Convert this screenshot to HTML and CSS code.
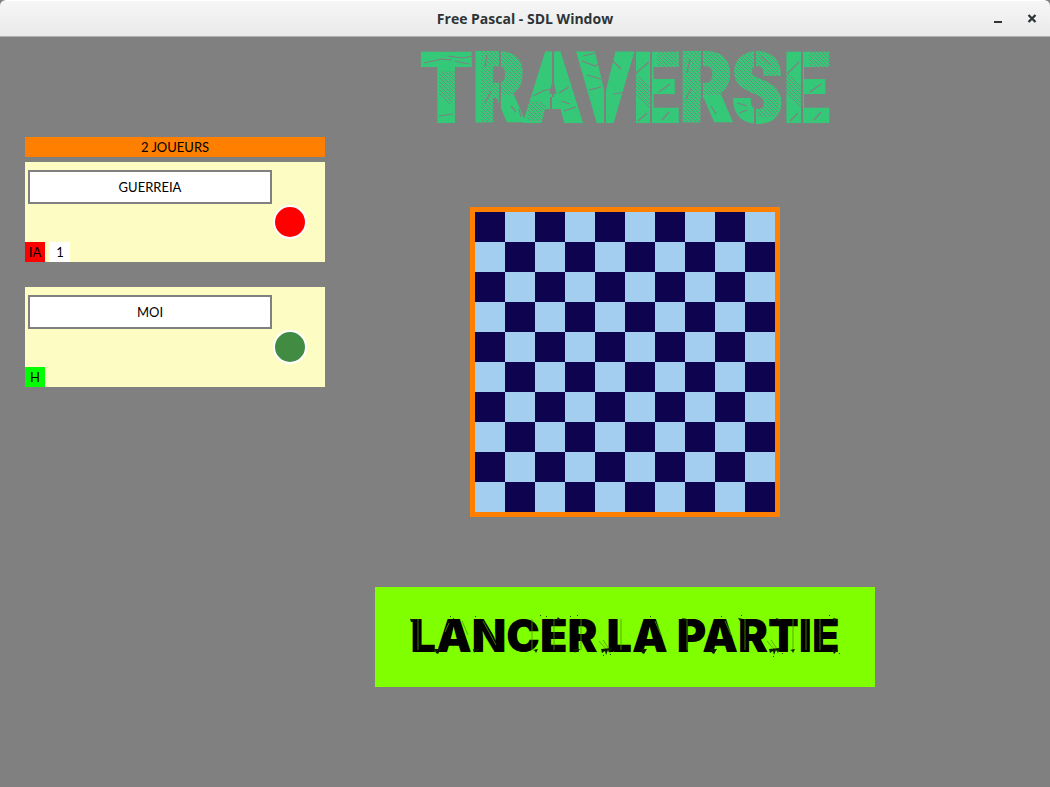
FILE: index.html
```html
<!DOCTYPE html>
<html lang="fr">
<head>
<meta charset="utf-8">
<title>Free Pascal - SDL Window</title>
<link rel="stylesheet" href="styles.css">
</head>
<body>
<header class="titlebar">
  <span class="window-title">Free Pascal - SDL Window</span>
  <div class="window-controls">
    <button class="control" aria-label="Minimize"><svg width="10" height="10" viewBox="0 0 10 10"><path d="M1 8h8" stroke="#2e3436" stroke-width="2"/></svg></button>
    <button class="control" aria-label="Close"><svg width="10" height="10" viewBox="0 0 10 10"><path d="M1.500 1l7 7M8.500 1l-7 7" stroke="#2e3436" stroke-width="2.300"/></svg></button>
  </div>
</header>
<main class="game">
  <aside class="players">
    <button class="player-count">2 JOUEURS</button>
    <section class="player">
      <input class="player-name" type="text" value="GUERREIA" aria-label="Nom du joueur 1">
      <button class="token token-red" aria-label="Couleur rouge"></button>
      <div class="player-options">
        <button class="tag tag-ai">IA</button>
        <button class="tag tag-level">1</button>
      </div>
    </section>
    <section class="player">
      <input class="player-name" type="text" value="MOI" aria-label="Nom du joueur 2">
      <button class="token token-green" aria-label="Couleur verte"></button>
      <div class="player-options">
        <button class="tag tag-human">H</button>
      </div>
    </section>
  </aside>
  <section class="stage">
    <div class="logo">
      <h1 class="logo-text">TRAVERSE</h1>
      <svg class="wear" width="408" height="74" viewBox="0 0 408 74" aria-hidden="true">
        <defs>
          <pattern id="hatch" width="4" height="4" patternUnits="userSpaceOnUse"><path d="M-1 -1l6 6M-1 3l2 2M3 -1l2 2" stroke="#808080" stroke-width="0.800"/></pattern>
        </defs>
        <path fill="url(#hatch)" d="M18 20h19v14l-8 20-11-10zM60 0h18v74h-18zM80 0h26v44h-26zM108 50h14l8 20h-24zM212 20l18 16v22l-18-14zM236 0h20v18h-20zM262 0h18v74h-18zM282 0h26v44h-26zM312 0h46v46h-46zM336 44h22v22h-22zM364 20l18 16v22l-18-14zM388 0h20v18h-20z"/>
        <g stroke="#808080" fill="none">
          <path stroke-width="2" d="M79 0v74M132 0v46M130 46v28M184 0v74M230 0v74M281 0v74M334 0v24M334 44v30M381 0v74"/>
          <path d="M3 12l18-4 10 1M26 5l16 2 10-2M34 10l14 3M18 65l14-2M66 4l-2 12M70 40l-6 12M90 55l5 6M98 58l2 8M112 45l10-5 8-2M138 42l10-6M143 60l12-4M140 50l9 3M162 5l12-3M161 10l13 5 4-2M166 24l14 4M168 39l12-3M190 8l10 10M192 43l13-2M214 23l14-12M217 70l9-8M238 41l11-8M241 69l7-8M269 8l-3 14M270 38l-5 10M290 55l5 8M316 52l10 3M318 62l8-3M340 5l10 9M366 23l12-12M369 70l8-8M389 41l11-8M393 69l7-8" stroke-width="1.200"/>
        </g>
      </svg>
    </div>
    <div class="board" role="img" aria-label="Plateau de jeu"></div>
    <button class="launch">LANCER LA PARTIE
      <svg class="wear" width="440" height="44" viewBox="0 0 440 44" aria-hidden="true">
        <path stroke="#4d9900" stroke-width="0.800" fill="none" d="M13 6v31M44 10l-4 9M57 8l6 14M78 8l13 24M127 6v31M149 6v31M176 6v31M194 28l8 9M198 27l6 9M216 6v31M250 8l6 14M282 6v31M320 8l6 14M340 6v31M362 28l8 9M366 27l6 9M388 6v31M401 6v31M415 6v31"/>
        <path fill="#0b1a00" d="M5 6h6v1h-2v2h-3zM29 36h7l-3 5-2-1-1-2zM68 36h6l-2 3-2-1-1 2zM128 37l5-1-2 4-1-2zM153 4l3 3-5 1zM168 36h7l-2 3-2-1-1 2zM196 36l11-1-2 5-2-3-2 5-1-4-3 2zM235 36h7l-3 5-2-1-1-2zM277 5l5 1-2 3zM305 36h7l-3 5-2-1-1-2zM333 5l5 1-3 2zM364 36l11-1-2 5-2-3-2 5-1-4-3 2zM371 5l6 2-5 1zM385 37l5-1-2 4-1-2zM428 5l5 1-4 3zM427 36l6 1-4 4z"/>
        <path fill="#214d00" d="M45 3h1v1h-1zM48 5h1v1h-1zM70 3h1v1h-1zM135 2h1v1h-1zM141 3h1v1h-1zM165 3h1v1h-1zM172 2h1v1h-1zM205 41h1v1h-1zM208 38h1v1h-1zM198 42h1v1h-1zM245 3h1v1h-1zM316 3h1v1h-1zM336 2h1v1h-1zM368 43h1v1h-1zM377 40h1v1h-1zM424 2h1v1h-1zM434 40h1v1h-1z"/>
      </svg>
    </button>
  </section>
</main>
</body>
</html>
```
FILE: styles.css
```css
* { box-sizing: border-box; }

body {
  margin: 0;
  min-height: 100vh;
  display: flex;
  flex-direction: column;
  background: #808080;
  font-family: Lato, "Liberation Sans", sans-serif;
}

button {
  border: 0;
  padding: 0;
  color: #000;
  font: inherit;
}

.titlebar {
  display: grid;
  grid-template-columns: 1fr auto 1fr;
  align-items: center;
  height: 37px;
  border-top: 1px solid #fff;
  border-bottom: 1px solid #b0b0b0;
  border-radius: 6px 6px 0 0;
  background: linear-gradient(#f6f6f6, #eaeaea);
}

.window-title {
  grid-column: 2;
  color: #2e3436;
  font: bold 14px "Open Sans", "Noto Sans", sans-serif;
}

.window-controls {
  display: flex;
  justify-content: flex-end;
  gap: 14px;
  padding-right: 8px;
}

.control {
  display: grid;
  place-items: center;
  width: 20px;
  height: 20px;
  background: none;
}

.game {
  flex: 1;
  display: grid;
  grid-template-columns: 300px 1fr;
  padding: 0 125px 0 25px;
}

.players {
  padding-top: 100px;
  font-size: 13px;
}

.player-count {
  display: block;
  width: 100%;
  height: 20px;
  margin-bottom: 5px;
  background: #ff8000;
}

.player {
  display: grid;
  grid-template-columns: 244px 1fr;
  grid-template-rows: 34px 1fr 20px;
  height: 100px;
  margin-bottom: 25px;
  padding: 8px 0 0 3px;
  background: #fdfcc3;
}

.player-name {
  grid-column: 1;
  border: 2px solid #808080;
  background: #fff;
  color: #000;
  font: inherit;
  text-align: center;
}

.token {
  grid-column: 2;
  grid-row: 2 / 4;
  width: 34px;
  height: 34px;
  margin: 1px 0 0 1px;
  border: 2px solid #fff;
  border-radius: 50%;
}

.token-red { background: #f00; }
.token-green { background: #418b43; }

.player-options {
  grid-column: 1;
  grid-row: 3;
  display: flex;
  gap: 5px;
  margin-left: -3px;
}

.tag {
  width: 20px;
  height: 20px;
}

.tag-ai { background: #f00; }
.tag-level { background: #fff; }
.tag-human { background: #0f0; }

.stage {
  display: flex;
  flex-direction: column;
  align-items: center;
}

.logo {
  position: relative;
  height: 170px;
}

.logo-text {
  margin: 0;
  color: #35c878;
  -webkit-text-stroke: 4px #35c878;
  font: bold 95px/104px "Liberation Sans Narrow", "Roboto Condensed", "Liberation Sans", sans-serif;
}

.wear {
  position: absolute;
  inset: 0;
  margin: auto;
}

.logo .wear {
  top: 14px;
  left: 50%;
  margin: 0 0 0 -204px;
}

.board {
  width: 310px;
  height: 310px;
  border: 5px solid #ff8000;
  background: conic-gradient(#a4cef0 25%, #0e034f 0 50%, #a4cef0 0 75%, #0e034f 0) 0 0 / 60px 60px padding-box;
}

.launch {
  position: relative;
  width: 500px;
  height: 100px;
  margin-top: 70px;
  padding-bottom: 4px;
  background: #80ff00;
  font: 900 45px Inter, "Liberation Sans", sans-serif;
}

.launch .wear {
  inset: 0 0 4px;
}
```
